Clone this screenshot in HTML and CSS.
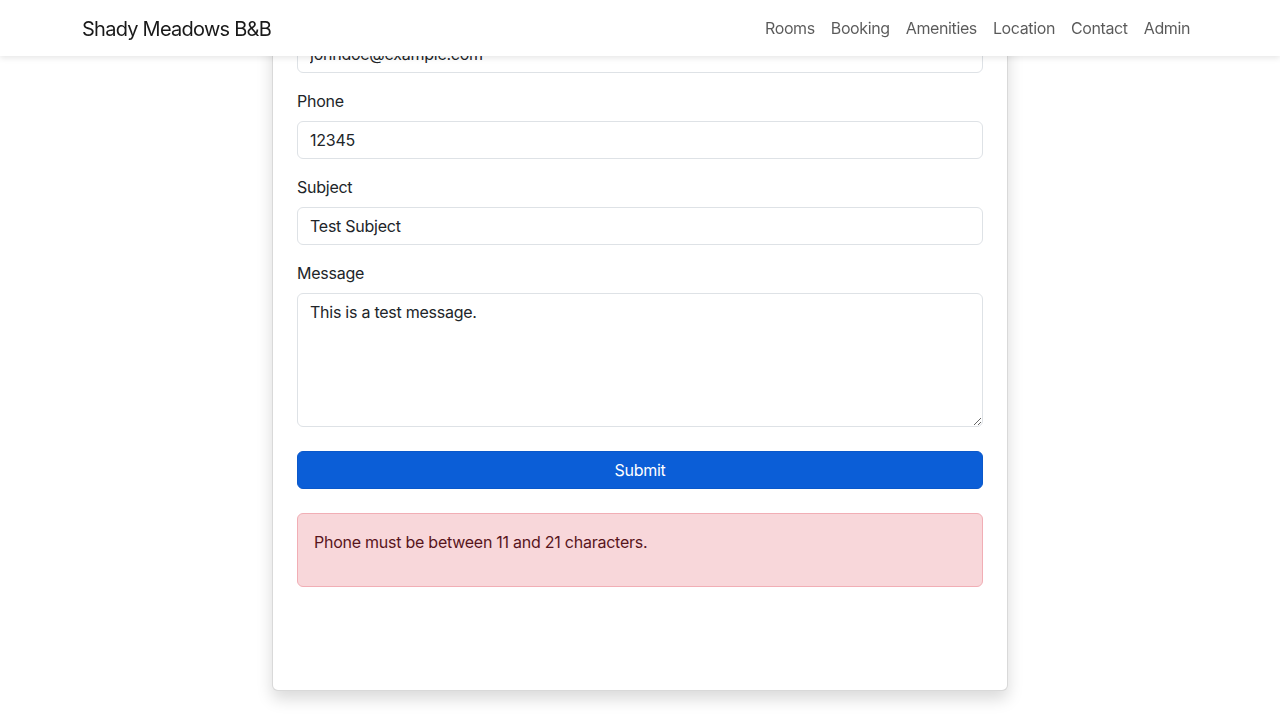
FILE: index.html
```html
<!DOCTYPE html>
<html lang="en">
<head>
<meta charset="utf-8">
<title>Shady Meadows B&amp;B</title>
<link rel="stylesheet" href="styles.css">
</head>
<body>
<nav class="navbar">
  <div class="nav-container">
    <a class="brand" href="#">Shady Meadows B&amp;B</a>
    <ul class="nav-links">
      <li><a href="#">Rooms</a></li>
      <li><a href="#">Booking</a></li>
      <li><a href="#">Amenities</a></li>
      <li><a href="#">Location</a></li>
      <li><a href="#">Contact</a></li>
      <li><a href="#">Admin</a></li>
    </ul>
  </div>
</nav>
<main class="page">
  <div class="card">
    <form class="contact-form">
      <div class="field">
        <label for="email">Email</label>
        <input id="email" class="control" type="email" value="johndoe@example.com">
      </div>
      <div class="field">
        <label for="phone">Phone</label>
        <input id="phone" class="control" type="tel" value="12345">
      </div>
      <div class="field">
        <label for="subject">Subject</label>
        <input id="subject" class="control" type="text" value="Test Subject">
      </div>
      <div class="field">
        <label for="message">Message</label>
        <textarea id="message" class="control textarea" rows="5">This is a test message.</textarea>
      </div>
      <button type="button" class="btn-submit">Submit</button>
      <div class="alert">
        <p>Phone must be between 11 and 21 characters.</p>
      </div>
    </form>
  </div>
</main>
</body>
</html>
```
FILE: styles.css
```css
* { box-sizing: border-box; }
html, body { margin: 0; padding: 0; }
body {
  font-family: Inter, "Liberation Sans", sans-serif;
  font-size: 16px;
  line-height: 24px;
  letter-spacing: -0.25px;
  color: #212529;
  background: #fff;
}
.navbar {
  position: fixed;
  top: 0; left: 0; right: 0;
  height: 56px;
  background: #fff;
  box-shadow: 0 2px 6px rgba(0,0,0,0.10);
  z-index: 10;
}
.nav-container {
  max-width: 1140px;
  margin: 0 auto;
  padding: 0 12px;
  height: 56px;
  display: flex;
  align-items: center;
  justify-content: space-between;
}
.brand {
  font-size: 20px;
  line-height: 30px;
  letter-spacing: -0.75px;
  color: rgba(0,0,0,0.9);
  text-decoration: none;
  padding-top: 1px;
}
.nav-links {
  list-style: none;
  margin: 0;
  padding: 0;
  display: flex;
}
.nav-links a {
  display: block;
  padding: 8px 8px;
  letter-spacing: -0.38px;
  color: rgba(0,0,0,0.65);
  text-decoration: none;
}
.page {
  width: 736px;
  margin: -22px auto 0;
  padding-bottom: 40px;
}
.card {
  border: 1px solid rgba(0,0,0,0.15);
  border-radius: 6px;
  padding: 24px;
  background: #fff;
  box-shadow: 0 8px 16px rgba(0,0,0,0.15);
}
.contact-form {
  display: flex;
  flex-direction: column;
  padding-bottom: 79px;
}
.field {
  display: flex;
  flex-direction: column;
  margin-bottom: 16px;
}
.field label {
  margin-bottom: 8px;
}
.control {
  display: block;
  width: 100%;
  height: 38px;
  padding: 6px 12px;
  font: inherit;
  letter-spacing: inherit;
  color: #212529;
  background: #fff;
  border: 1px solid #dee2e6;
  border-radius: 6px;
}
.textarea {
  height: 134px;
  resize: vertical;
}
.btn-submit {
  margin-top: 8px;
  height: 38px;
  font: inherit;
  letter-spacing: inherit;
  color: #fff;
  background: #0b5ed7;
  border: 1px solid #0a58ca;
  border-radius: 6px;
}
.alert {
  margin-top: 24px;
  padding: 16px;
  background: #f8d7da;
  border: 1px solid #f1aeb5;
  border-radius: 6px;
  color: #58151c;
}
.alert p {
  margin: 0 0 16px;
}
```
